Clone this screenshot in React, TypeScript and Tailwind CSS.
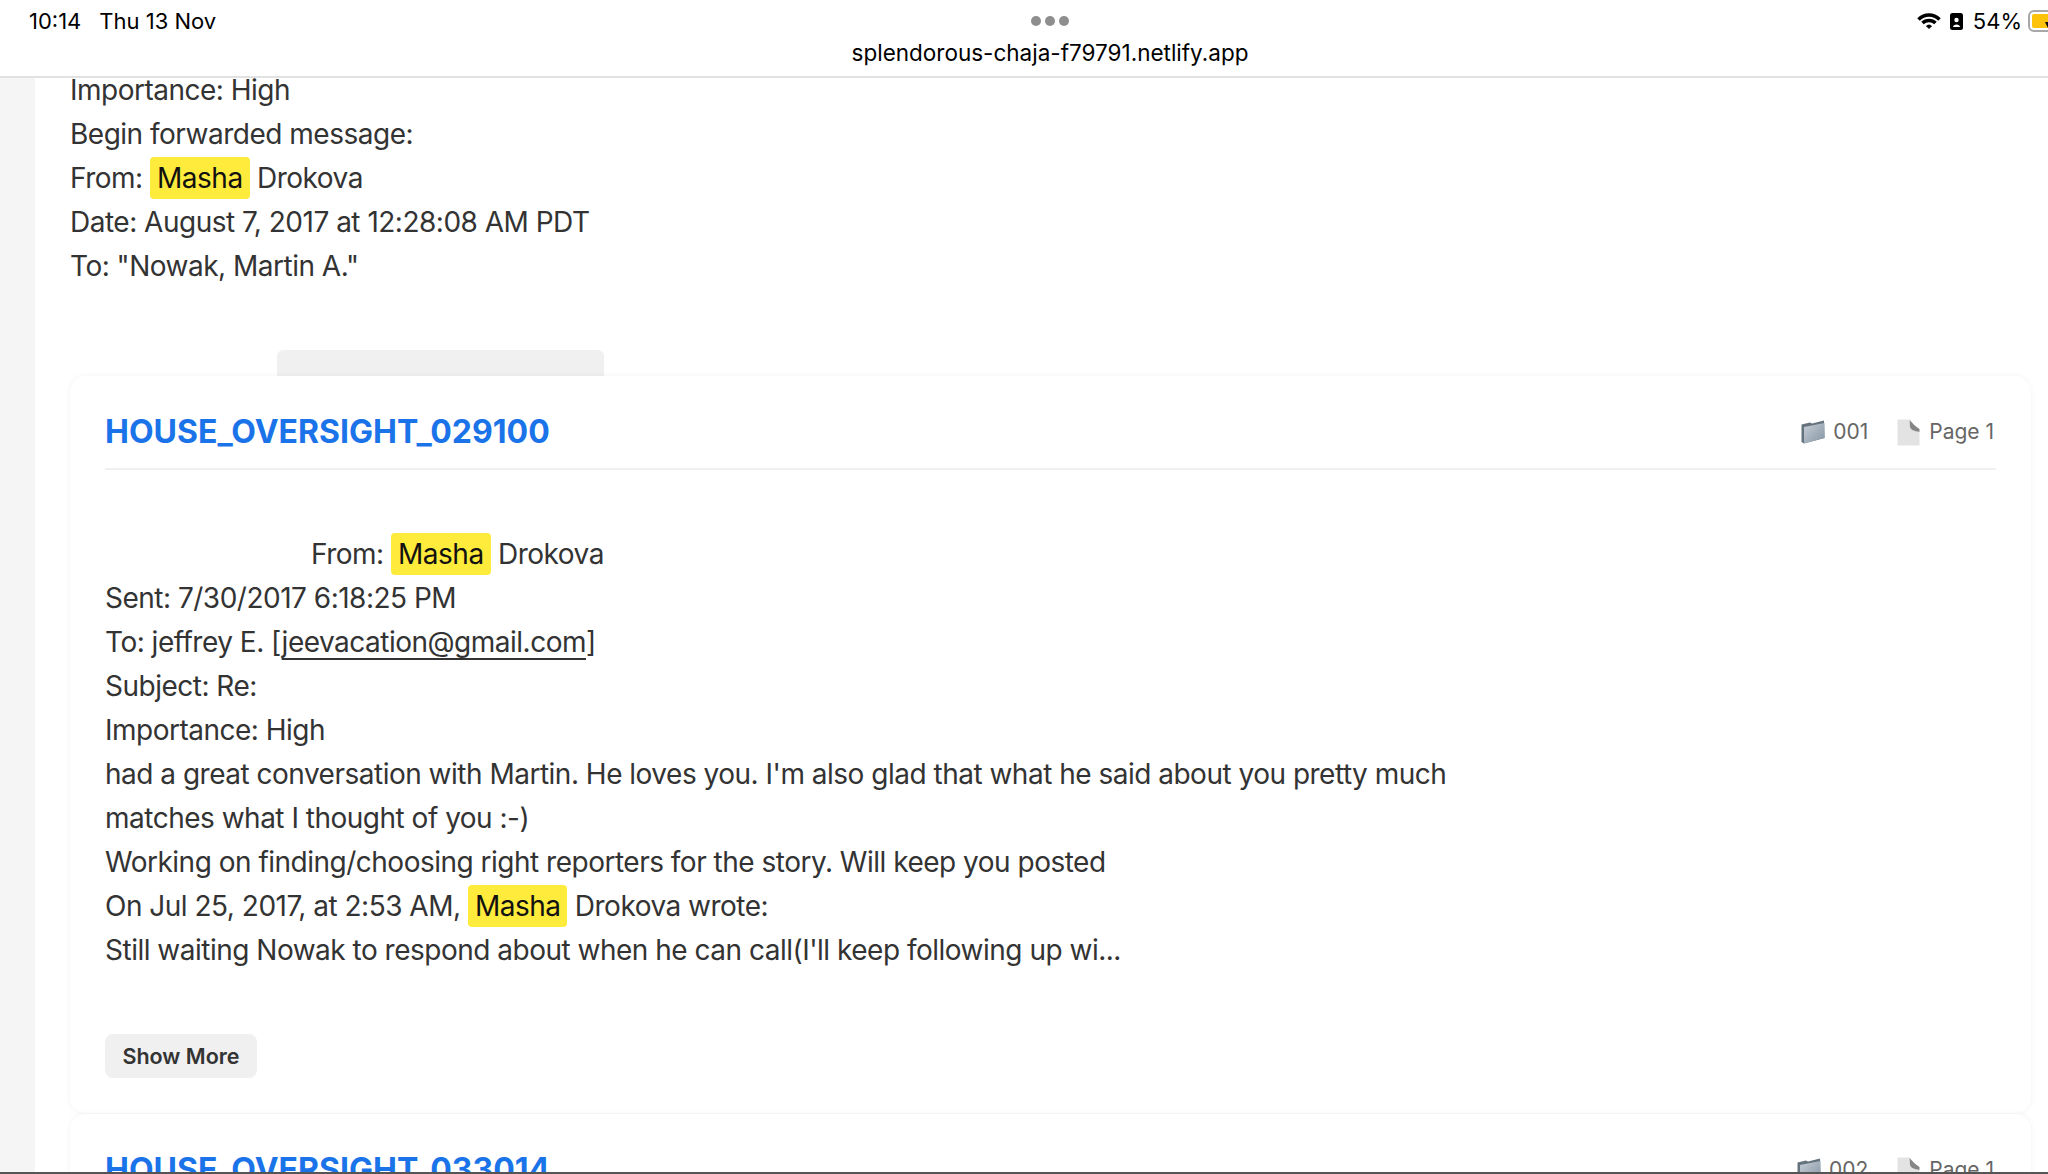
import React from 'react';

const Mark = ({ children }: { children: React.ReactNode }) => (
    <mark className="bg-[#ffeb3b] text-[#111] rounded-[4px] px-[7px] py-[4px]">{children}</mark>
);

const FolderIcon = ({ id }: { id: string }) => (
    <svg width="24" height="24" viewBox="0 0 24 24" className="shrink-0">
        <defs>
            <linearGradient id={id} x1="0" y1="0" x2="1" y2="1">
                <stop offset="0" stopColor="#c6ced6" />
                <stop offset="1" stopColor="#8494a3" />
            </linearGradient>
        </defs>
        <path d="M0.500 4.500 L9 2.500 L11 3.500 L23 0.500 L23.500 18 L3 23.500 L0.500 22 Z" fill="#65737f" />
        <path d="M3 7 L23.500 3 L23.500 18 L3 23.500 Z" fill={`url(#${id})`} />
    </svg>
);

const PageIcon = () => (
    <svg width="23" height="27" viewBox="0 0 23 27" className="shrink-0">
        <path d="M0.500 0.500 L12 0.500 C13 6 14 10 22.500 13 L22.500 26.500 L0.500 26.500 Z" fill="#e3e3e3" />
        <path d="M12.500 0.500 C14 3 19 8 22.500 10 L22.500 13 C17 12 14 11 13 8 Z" fill="#858585" />
    </svg>
);

const CardHeader = ({ title, folder, id }: { title: string; folder: string; id: string }) => (
    <div className="flex items-center justify-between h-[67px] pb-[7px] border-b-2 border-[#f0f0f0] tracking-normal">
        <a className="text-[32px] font-bold text-[#1a73e8] leading-none">{title}</a>
        <div className="flex items-center text-[21px] text-[#666] mr-[2px]">
            <FolderIcon id={id} />
            <span className="ml-[8px]">{folder}</span>
            <span className="ml-[29px]"><PageIcon /></span>
            <span className="ml-[9px]">Page 1</span>
        </div>
    </div>
);

const App: React.FC = () => {
    return (
        <div className="h-[1174px] w-[2048px] overflow-hidden flex flex-col bg-[#f5f5f5] border-b-2 border-[#555] font-['Inter','Noto_Sans',sans-serif]">
            {/* browser bar */}
            <header className="relative h-[78px] shrink-0 bg-white border-b-2 border-[#e2e2e2] text-black">
                <div className="flex items-center justify-between h-[42px] pl-[29px]">
                    <div className="flex text-[22px] gap-[18px]">
                        <span>10:14</span>
                        <span>Thu 13 Nov</span>
                    </div>
                    <div className="flex items-center text-[22px] -mr-[20px]">
                        <svg width="24" height="17" viewBox="0 0 24 17" fill="none" stroke="#000" strokeWidth="3.500">
                            <path d="M1.500 6.500 C7.500 0.500 16.500 0.500 22.500 6.500" />
                            <path d="M5.500 10 C9 6.500 15 6.500 18.500 10" />
                            <path d="M9.500 13 L12 15.500 L14.500 13 C13 11.800 11 11.800 9.500 13 Z" fill="#000" strokeWidth="1" />
                        </svg>
                        <svg width="13" height="17" viewBox="0 0 13 17" className="ml-[9px]">
                            <rect width="13" height="17" rx="2.500" fill="#000" />
                            <circle cx="6.500" cy="7" r="2.200" fill="#fff" />
                            <path d="M3 14 C3 10.500 10 10.500 10 14 Z" fill="#fff" />
                        </svg>
                        <span className="ml-[10px]">54%</span>
                        <svg width="40" height="22" viewBox="0 0 40 22" className="ml-[6px]">
                            <rect x="1" y="1" width="36" height="20" rx="5" fill="#fff" stroke="#a8a8a8" strokeWidth="2" />
                            <rect x="4" y="4" width="22" height="14" rx="2" fill="#fdc30a" />
                            <path d="M22 22 L17 12 L22 12 L20 2 L28 10 L24 10 Z" fill="#000" />
                        </svg>
                    </div>
                </div>
                <div className="absolute top-[16px] left-[1031px] flex gap-[4px]">
                    <span className="w-[10px] h-[10px] rounded-full bg-[#8e8e8e]" />
                    <span className="w-[10px] h-[10px] rounded-full bg-[#8e8e8e]" />
                    <span className="w-[10px] h-[10px] rounded-full bg-[#8e8e8e]" />
                </div>
                <div className="text-center text-[22.5px] leading-none w-[2100px]">splendorous-chaja-f79791.netlify.app</div>
            </header>

            {/* results */}
            <main className="ml-[35px] flex-1 bg-white pl-[35px] pr-[17px] text-[28px] tracking-[-0.5px] leading-[44px] text-[#333]">
                <div className="h-[210px] -mt-[10px]">
                    <p>Importance: High</p>
                    <p>Begin forwarded message:</p>
                    <p>From: <Mark>Masha</Mark> Drokova</p>
                    <p>Date: August 7, 2017 at 12:28:08 AM PDT</p>
                    <p>To: "Nowak, Martin A."</p>
                </div>
                <div className="h-[26px] w-[327px] ml-[207px] mt-[72px] mb-0 bg-[#f0f0f0] rounded-t-[6px]" />

                <section className="h-[737px] rounded-[16px] bg-white px-[35px] pt-[27px] shadow-[0_0_6px_rgba(0,0,0,0.05)]">
                    <CardHeader title="HOUSE_OVERSIGHT_029100" folder="001" id="folder-a" />
                    <div className="mt-[62px]">
                        <p className="pl-[206px]">From: <Mark>Masha</Mark> Drokova</p>
                        <p>Sent: 7/30/2017 6:18:25 PM</p>
                        <p>To: jeffrey E. [<span className="underline underline-offset-[6px] decoration-[2px]">jeevacation@gmail.com</span>]</p>
                        <p>Subject: Re:</p>
                        <p>Importance: High</p>
                        <p>had a great conversation with Martin. He loves you. I'm also glad that what he said about you pretty much</p>
                        <p>matches what I thought of you :-)</p>
                        <p>Working on finding/choosing right reporters for the story. Will keep you posted</p>
                        <p>On Jul 25, 2017, at 2:53 AM, <Mark>Masha</Mark> Drokova wrote:</p>
                        <p>Still waiting Nowak to respond about when he can call(I'll keep following up wi...</p>
                    </div>
                    <button className="mt-[62px] h-[44px] w-[152px] rounded-[8px] bg-[#f0f0f0] text-[21.5px] tracking-normal font-semibold text-[#333]">Show More</button>
                </section>

                <section className="h-[200px] mt-[1px] rounded-[16px] bg-white px-[35px] pt-[27px] shadow-[0_0_6px_rgba(0,0,0,0.05)]">
                    <CardHeader title="HOUSE_OVERSIGHT_033014" folder="002" id="folder-b" />
                </section>
            </main>
        </div>
    );
};

export default App;
